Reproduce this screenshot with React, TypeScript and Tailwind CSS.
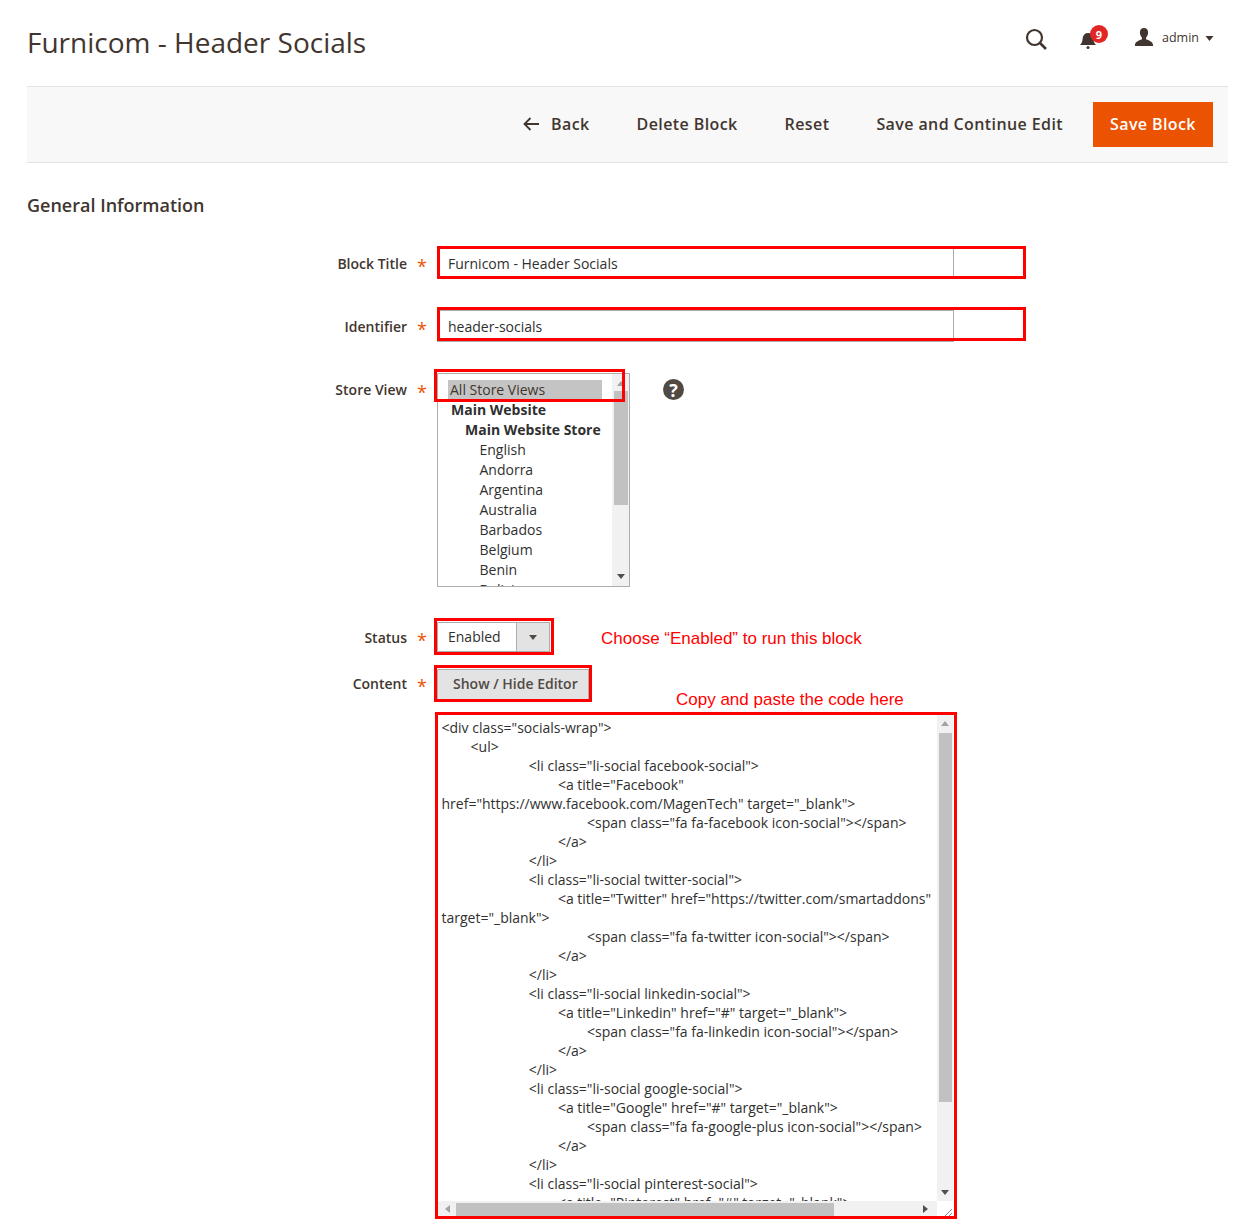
const code = [
  '<div class="socials-wrap">',
  '        <ul>',
  '                        <li class="li-social facebook-social">',
  '                                <a title="Facebook"',
  'href="https://www.facebook.com/MagenTech" target="_blank">',
  '                                        <span class="fa fa-facebook icon-social"></span>',
  '                                </a>',
  '                        </li>',
  '                        <li class="li-social twitter-social">',
  '                                <a title="Twitter" href="https://twitter.com/smartaddons"',
  'target="_blank">',
  '                                        <span class="fa fa-twitter icon-social"></span>',
  '                                </a>',
  '                        </li>',
  '                        <li class="li-social linkedin-social">',
  '                                <a title="Linkedin" href="#" target="_blank">',
  '                                        <span class="fa fa-linkedin icon-social"></span>',
  '                                </a>',
  '                        </li>',
  '                        <li class="li-social google-social">',
  '                                <a title="Google" href="#" target="_blank">',
  '                                        <span class="fa fa-google-plus icon-social"></span>',
  '                                </a>',
  '                        </li>',
  '                        <li class="li-social pinterest-social">',
  '                                <a title="Pinterest" href="#" target="_blank">',
];

const stores: [string, string][] = [
  ['Main Website', 'pl-[3px] font-bold'],
  ['Main Website Store', 'pl-[17px] font-bold'],
  ['English', 'pl-[31.5px]'],
  ['Andorra', 'pl-[31.5px]'],
  ['Argentina', 'pl-[31.5px]'],
  ['Australia', 'pl-[31.5px]'],
  ['Barbados', 'pl-[31.5px]'],
  ['Belgium', 'pl-[31.5px]'],
  ['Benin', 'pl-[31.5px]'],
  ['Bolivia', 'pl-[31.5px]'],
];

function Label({ text, className = '' }: { text: string; className?: string }) {
  return (
    <div className={`flex w-[437px] shrink-0 justify-end ${className}`}>
      <span className="text-[14px] font-semibold leading-[20px] text-[#41362f]">{text}</span>
      <span className="ml-[10px] mr-[12px] w-[8px] text-[18px] leading-[24px] text-[#eb5202]">*</span>
    </div>
  );
}

function Arrow({ dir, className }: { dir: 'up' | 'down' | 'left' | 'right'; className: string }) {
  const pts = { up: '0,5 4,0 8,5', down: '0,0 4,5 8,0', left: '5,0 5,8 0,4', right: '0,0 0,8 5,4' }[dir];
  return (
    <svg viewBox={dir === 'up' || dir === 'down' ? '0 0 8 5' : '0 0 5 8'} className={className}>
      <polygon points={pts} fill="currentColor" />
    </svg>
  );
}

export default function App() {
  return (
    <div className="relative h-[1230px] w-[1255px] overflow-hidden bg-white font-['Open_Sans',sans-serif] text-[#41362f]">
      <header className="flex h-[86px] items-start justify-between pl-[27px] pr-[41px]">
        <h1 className="mt-[21px] text-[28px] font-normal leading-[42px] text-[#41362f]">Furnicom - Header Socials</h1>
        <div className="mt-[24px] flex items-start">
          <svg viewBox="0 0 24 24" className="mr-[31px] mt-[3px] h-[24px] w-[24px]" fill="none" stroke="#41362f">
            <circle cx="10.5" cy="10.5" r="7.5" strokeWidth="2.2" />
            <line x1="16" y1="16" x2="22" y2="22" strokeWidth="2.6" />
          </svg>
          <div className="relative mr-[35px] mt-[6px] h-[20px] w-[20px]">
            <svg viewBox="0 0 20 20" className="h-[20px] w-[20px]" fill="#41362f">
              <path d="M1 15c2-2 2.5-4 2.7-7C4 5 6 3 9 3s5 2 5.300 5c.2 3 .7 5 2.700 7z" />
              <circle cx="9" cy="17.500" r="1.500" />
            </svg>
            <span className="absolute left-[11px] top-[-5px] flex h-[18px] w-[18px] items-center justify-center rounded-full bg-[#e22626] text-[11px] font-bold leading-none text-white">9</span>
          </div>
          <svg viewBox="0 0 20 20" className="mr-[8px] mt-[4px] h-[19px] w-[20px]" fill="#41362f">
            <path d="M10 0c3 0 4.300 2 4.300 4.800 0 2.200-1 4.200-2.100 5.200v1.800c2.500 1.200 6.800 2.300 7.300 5.700V19H.5v-1.500c.5-3.400 4.800-4.500 7.300-5.700V10C6.700 9 5.700 7 5.700 4.800 5.700 2 7 0 10 0z" />
          </svg>
          <span className="mt-[5px] text-[12.500px] leading-[18px] text-[#41362f]">admin</span>
          <Arrow dir="down" className="ml-[6px] mt-[12px] h-[5px] w-[9px] text-[#41362f]" />
        </div>
      </header>

      <div className="ml-[27px] flex h-[77px] w-[1201px] items-center justify-end border-y border-[#e3e3e3] bg-[#f8f8f8] pr-[15px] text-[16px] font-semibold leading-[22px] tracking-[0.4px] text-[#41362f]">
        <svg viewBox="0 0 16 14" className="mb-[2px] mr-[12px] h-[14px] w-[16px]" fill="none" stroke="#41362f" strokeWidth="1.800">
          <path d="M16 7H1.500M7.500 1 1.500 7l6 6" />
        </svg>
        <span className="mb-[2px] mr-[47px]">Back</span>
        <span className="mb-[2px] mr-[47px]">Delete Block</span>
        <span className="mb-[2px] mr-[47px]">Reset</span>
        <span className="mb-[2px] mr-[30px]">Save and Continue Edit</span>
        <button className="h-[45px] w-[120px] bg-[#eb5202] pb-[2px] text-white">Save Block</button>
      </div>

      <h2 className="ml-[27px] mt-[30px] text-[18px] font-semibold leading-[25px] text-[#41362f]">General Information</h2>

      <div className="mt-[30px] flex h-[30px] items-start">
        <Label text="Block Title" className="pt-[6px]" />
        <div className="flex h-[30px] w-[517px] items-center border-r border-[#adadad] pl-[11px] text-[14px] text-[#303030]">Furnicom - Header Socials</div>
      </div>

      <div className="mt-[32px] flex h-[32px] items-start">
        <Label text="Identifier" className="pt-[7px]" />
        <div className="flex h-[32px] w-[517px] items-center border border-[#adadad] pl-[10px] pt-[1px] text-[14px] text-[#303030]">header-socials</div>
      </div>

      <div className="mt-[31px] flex">
        <Label text="Store View" className="items-start pt-[7px]" />
        <div className="relative h-[214px] w-[193px] overflow-hidden border border-[#adadad] text-[14px] leading-[20px] text-[#303030]">
          <div className="pl-[10px] pt-[6px]">
            <div className="w-[154px] bg-[#c4c4c4] pl-[2px] text-[#41362f]">All Store Views</div>
            {stores.map(([name, cls]) => (
              <div key={name} className={cls}>{name}</div>
            ))}
          </div>
          <div className="absolute bottom-0 right-0 top-0 flex w-[17px] flex-col items-center bg-[#f1f1f1]">
            <Arrow dir="up" className="mt-[7px] h-[5px] w-[8px] text-[#a3a3a3]" />
            <div className="mt-[5px] h-[114px] w-[14px] bg-[#c1c1c1]" />
            <Arrow dir="down" className="absolute bottom-[7px] h-[5px] w-[8px] text-[#505050]" />
          </div>
        </div>
        <div className="ml-[33px] mt-[6px] flex h-[21px] w-[21px] items-center justify-center rounded-full bg-[#514943] text-[18px] font-bold leading-none text-white">?</div>
      </div>

      <div className="mt-[35px] flex h-[30px] items-start">
        <Label text="Status" className="pt-[6px]" />
        <div className="flex h-[30px] w-[113px] border border-[#adadad] text-[14px] text-[#303030]">
          <span className="flex w-[79px] items-center border-r border-[#adadad] pb-[2px] pl-[10px]">Enabled</span>
          <span className="flex flex-1 items-center justify-center bg-[#e3e3e3]">
            <Arrow dir="down" className="h-[5px] w-[8px] text-[#514943]" />
          </span>
        </div>
      </div>

      <div className="mt-[17px] flex h-[31px] items-start">
        <Label text="Content" className="pt-[5px]" />
        <button className="h-[31px] w-[152px] border border-[#adadad] bg-[#e3e3e3] pb-[2px] pl-[15px] text-left text-[14px] font-semibold text-[#514943]">Show / Hide Editor</button>
      </div>

      <div className="relative ml-[438px] mt-[15px] h-[501px] w-[515px] overflow-hidden">
        <pre className="pl-[3.5px] pt-[3px] font-['Open_Sans',sans-serif] text-[14px] leading-[19px] text-[#303030]">{code.join('\n')}</pre>
        <div className="absolute bottom-0 right-0 top-0 flex w-[16px] flex-col items-center bg-[#f1f1f1]">
          <Arrow dir="up" className="mt-[6px] h-[5px] w-[8px] text-[#a3a3a3]" />
          <div className="mt-[7px] h-[369px] w-[13px] bg-[#c1c1c1]" />
          <Arrow dir="down" className="absolute bottom-[21px] h-[5px] w-[8px] text-[#505050]" />
        </div>
        <div className="absolute bottom-0 left-0 right-[16px] h-[15px] bg-[#f1f1f1]">
          <Arrow dir="left" className="absolute left-[7px] top-[4px] h-[8px] w-[5px] text-[#a3a3a3]" />
          <div className="absolute bottom-0 left-[18px] h-[13px] w-[378px] bg-[#c1c1c1]" />
          <Arrow dir="right" className="absolute right-[9px] top-[4px] h-[8px] w-[5px] text-[#505050]" />
        </div>
        <svg viewBox="0 0 16 15" className="absolute bottom-0 right-0 h-[15px] w-[16px] bg-white" stroke="#8a8a8a" strokeWidth="1">
          <path d="M8 15l7-7M12 15l3-3" />
        </svg>
      </div>

      {/* Red annotation boxes drawn over the form */}
      <div className="absolute left-[437px] top-[246px] h-[33px] w-[589px] border-[3px] border-[#ff0000]" />
      <div className="absolute left-[437px] top-[307px] h-[34px] w-[589px] border-[3px] border-[#ff0000]" />
      <div className="absolute left-[434px] top-[369px] h-[33px] w-[191px] border-[3px] border-[#ff0000]" />
      <div className="absolute left-[434px] top-[618px] h-[37px] w-[120px] border-[3px] border-[#ff0000]" />
      <div className="absolute left-[434px] top-[665px] h-[37px] w-[158px] border-[3px] border-[#ff0000]" />
      <div className="absolute left-[435px] top-[712px] h-[507px] w-[522px] border-[3px] border-[#ff0000]" />
      <span className="absolute left-[601px] top-[629px] font-['Liberation_Sans',sans-serif] text-[17px] leading-[19px] text-[#ff0000]">Choose “Enabled” to run this block</span>
      <span className="absolute left-[676px] top-[690px] font-['Liberation_Sans',sans-serif] text-[17px] leading-[19px] text-[#ff0000]">Copy and paste the code here</span>
    </div>
  );
}
